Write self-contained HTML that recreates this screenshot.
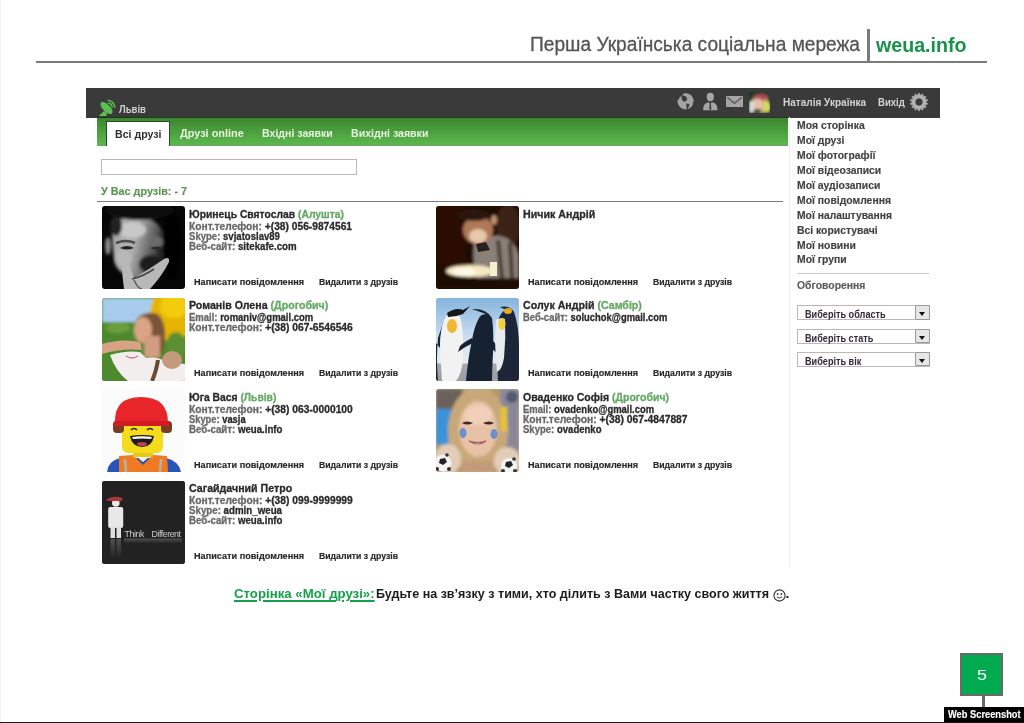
<!DOCTYPE html><html><head><meta charset="utf-8"><style>
html,body{margin:0;padding:0;background:#fff;width:1024px;height:723px;overflow:hidden;position:relative}
body{font-family:"Liberation Sans",sans-serif}
.t{position:absolute;white-space:nowrap;transform-origin:0 0;line-height:1}
.s{-webkit-text-stroke:0.3px currentColor}
.s2{-webkit-text-stroke:0.15px currentColor}
.b{position:absolute}
</style></head><body>

<div class="b" style="left:0;top:0;width:1px;height:723px;background:#f3f3f3"></div>
<div class="b" style="left:36px;top:60.5px;width:951px;height:2.7px;background:#7a7a7a"></div>
<div class="b" style="left:867px;top:29px;width:3px;height:33px;background:#7a7a7a"></div>
<div class="b" style="left:86px;top:88px;width:854px;height:29.5px;background:#3a3a3b"></div>
<div class="b" style="left:97px;top:117.5px;width:691px;height:28px;background:linear-gradient(#3c8630,#5ab64c 92%,#6aa862);box-sizing:border-box"></div>
<div class="b" style="left:97px;top:116.5px;width:691px;height:1.5px;background:#1d3a1a"></div>
<div class="b" style="left:105.5px;top:121px;width:64.5px;height:25px;background:#fff;border:1px solid #234a20;border-bottom:none;box-sizing:border-box"></div>
<div class="b" style="left:788.5px;top:117px;width:1px;height:450px;background:#f0f0f0"></div>
<div class="b" style="left:797px;top:272.5px;width:132px;height:1.5px;background:#c8c8c8"></div>
<div class="b" style="left:796.6px;top:305.3px;width:133px;height:14.6px;border:1px solid #b8b8b8;box-sizing:border-box;background:#fff"></div>
<div class="b" style="left:914.8px;top:305.4px;width:14.8px;height:14.4px;background:#e6e6e6;border:1.3px solid #9a9a9a;box-sizing:border-box;border-radius:1px"></div>
<div class="b" style="left:919px;top:311.9px;width:0;height:0;border-left:3.6px solid transparent;border-right:3.6px solid transparent;border-top:4.2px solid #111"></div>
<div class="b" style="left:796.6px;top:329.0px;width:133px;height:14.6px;border:1px solid #b8b8b8;box-sizing:border-box;background:#fff"></div>
<div class="b" style="left:914.8px;top:329.1px;width:14.8px;height:14.4px;background:#e6e6e6;border:1.3px solid #9a9a9a;box-sizing:border-box;border-radius:1px"></div>
<div class="b" style="left:919px;top:335.6px;width:0;height:0;border-left:3.6px solid transparent;border-right:3.6px solid transparent;border-top:4.2px solid #111"></div>
<div class="b" style="left:796.6px;top:352.0px;width:133px;height:14.6px;border:1px solid #b8b8b8;box-sizing:border-box;background:#fff"></div>
<div class="b" style="left:914.8px;top:352.1px;width:14.8px;height:14.4px;background:#e6e6e6;border:1.3px solid #9a9a9a;box-sizing:border-box;border-radius:1px"></div>
<div class="b" style="left:919px;top:358.6px;width:0;height:0;border-left:3.6px solid transparent;border-right:3.6px solid transparent;border-top:4.2px solid #111"></div>
<div class="b" style="left:101px;top:158.7px;width:256px;height:16.5px;border:1px solid #b8b8b8;box-sizing:border-box"></div>
<div class="b" style="left:97px;top:201px;width:686px;height:1.2px;background:#7a7a7a"></div>
<div class="b" style="left:960px;top:652.5px;width:43px;height:43px;background:#00aa4f;border:2.5px solid #6a6a6a;box-sizing:border-box"></div>
<div class="b" style="left:982px;top:695px;width:2.5px;height:12px;background:#6a6a6a"></div>
<div class="b" style="left:944px;top:706.5px;width:80px;height:17px;background:#000"></div>
<div class="b" style="left:0;top:721.5px;width:1024px;height:1.5px;background:#1a1a1a"></div>
<svg class="b" style="left:772.5px;top:588.5px" width="13" height="13" viewBox="0 0 13 13"><circle cx="6.5" cy="6.5" r="5.6" fill="none" stroke="#333" stroke-width="1.1"/><circle cx="4.6" cy="5" r="0.9" fill="#333"/><circle cx="8.4" cy="5" r="0.9" fill="#333"/><path d="M3.8 7.8 Q6.5 10.5 9.2 7.8" fill="none" stroke="#333" stroke-width="1"/></svg>
<svg class="b" style="left:102.0px;top:206.2px" width="83" height="83" viewBox="0 0 83 83">
<defs><clipPath id="ca"><rect width="83" height="83" rx="3"/></clipPath>
<filter id="fa" x="-30%" y="-30%" width="160%" height="160%"><feGaussianBlur stdDeviation="1.6"/></filter>
<filter id="ga" x="-30%" y="-30%" width="160%" height="160%"><feGaussianBlur stdDeviation="0.6"/></filter></defs>
<g clip-path="url(#ca)"><rect width="83" height="83" fill="#060606"/>
<defs><linearGradient id="fg1" x1="0" y1="0" x2="1" y2="0.3"><stop offset="0" stop-color="#a8a8a8"/><stop offset="0.5" stop-color="#b0b0b0"/><stop offset="0.85" stop-color="#5a5a5a"/><stop offset="1" stop-color="#202020"/></linearGradient></defs>
<g filter="url(#fa)">
<path d="M10 28 Q12 10 34 10 Q58 12 62 30 L62 56 Q58 72 40 74 Q16 70 12 55Z" fill="url(#fg1)"/>
<ellipse cx="30" cy="24" rx="14" ry="8" fill="#c8c8c8"/>
<ellipse cx="22" cy="52" rx="8" ry="8" fill="#b8b8b8"/>
<ellipse cx="48" cy="58" rx="11" ry="9" fill="#1e1e1e"/>
<ellipse cx="54" cy="36" rx="7" ry="6" fill="#6a6a6a"/>
<ellipse cx="70" cy="40" rx="9" ry="34" fill="#060606"/>
<ellipse cx="6" cy="40" rx="3" ry="9" fill="#8a8a8a"/>
<ellipse cx="38" cy="4" rx="34" ry="10" fill="#0a0a0a"/>
<ellipse cx="14" cy="20" rx="6" ry="10" fill="#202020"/>
</g>
<g filter="url(#ga)">
<path d="M18 42 Q25 38 32 42 Q25 45 18 42Z" fill="#222"/>
<path d="M48 42 Q55 39 61 42 Q55 45 48 42Z" fill="#2a2a2a"/>
<path d="M14 37 Q24 33 33 37" stroke="#333" stroke-width="2.6" fill="none" opacity="0.8"/>
<path d="M20 57 Q24 53 27 58 L32 72 Q46 64 62 53 Q68 50 67 56 Q60 70 48 83 L22 83 Q20 70 20 57Z" fill="#b8b8b8"/>
<path d="M30 73 Q42 70 52 63" stroke="#4a4a4a" stroke-width="1.8" fill="none"/>
<path d="M32 74 Q36 83 40 83" stroke="#555" stroke-width="1.4" fill="none"/>
</g></g></svg>
<svg class="b" style="left:102.0px;top:297.7px" width="83" height="83" viewBox="0 0 83 83">
<defs><clipPath id="cb"><rect width="83" height="83" rx="3"/></clipPath>
<filter id="fb" x="-30%" y="-30%" width="160%" height="160%"><feGaussianBlur stdDeviation="1.6"/></filter>
<filter id="gb" x="-30%" y="-30%" width="160%" height="160%"><feGaussianBlur stdDeviation="0.6"/></filter></defs>
<g clip-path="url(#cb)"><rect width="83" height="83" fill="#4f8a2c"/>
<g filter="url(#fb)">
<rect x="0" y="0" width="56" height="30" fill="#a8cdec"/>
<ellipse cx="70" cy="16" rx="22" ry="28" fill="#e6b400"/>
<ellipse cx="72" cy="8" rx="14" ry="12" fill="#f2cc10"/>
<rect x="0" y="24" width="40" height="59" fill="#4e8a2e"/>
<ellipse cx="16" cy="30" rx="12" ry="5" fill="#6e9e3a"/>
<ellipse cx="74" cy="48" rx="10" ry="14" fill="#5a9030"/>
<path d="M34 22 Q42 12 56 16 Q66 26 62 50 L56 62 L44 52Z" fill="#7a5436"/>
<ellipse cx="41" cy="32" rx="9" ry="13" fill="#dba486"/>
<rect x="42" y="38" width="16" height="22" fill="#d49c80"/>
</g>
<g filter="url(#gb)">
<path d="M0 46 Q20 40 38 44 L40 52 Q20 50 0 56 Z" fill="#d8a286"/>
<path d="M8 57 Q24 52 38 54 L44 60 Q56 58 64 64 L83 66 L83 83 L26 83 Q14 74 8 57Z" fill="#f2eeee"/>
<ellipse cx="70" cy="62" rx="10" ry="9" fill="#c4987c"/>
<path d="M24 58 Q30 62 36 58" stroke="#d07080" stroke-width="1.5" fill="none"/>
<path d="M56 62 Q54 74 50 83" stroke="#6a4a30" stroke-width="4" fill="none"/>
<rect x="0" y="56" width="8" height="27" fill="#4e8a2e"/>
</g></g></svg>
<svg class="b" style="left:102.0px;top:389.2px" width="83" height="83" viewBox="0 0 83 83">
<defs><clipPath id="cc"><rect width="83" height="83" rx="0"/></clipPath>
<filter id="fc" x="-30%" y="-30%" width="160%" height="160%"><feGaussianBlur stdDeviation="1.6"/></filter>
<filter id="gc" x="-30%" y="-30%" width="160%" height="160%"><feGaussianBlur stdDeviation="0.6"/></filter></defs>
<g clip-path="url(#cc)"><rect width="83" height="83" fill="#fbfbfb"/>
<g filter="url(#gc)">
<path d="M5 83 Q6 72 18 69 L64 69 Q77 72 79 83 Z" fill="#2a55b8"/>
<path d="M17 67 L31 66 L41 76 L51 66 L65 67 L66 83 L17 83 Z" fill="#f07a22"/>
<path d="M23 70 L24 83 M59 70 L58 83" stroke="#b8b0a0" stroke-width="2.6"/>
<path d="M33 66 L41 73 L49 66 Z" fill="#f4f4f4"/>
<rect x="31" y="62" width="20" height="6" fill="#e8c818"/>
<rect x="20" y="32" width="41" height="32" rx="6" fill="#f4dc1a"/>
<rect x="11" y="32" width="11" height="12" rx="4" fill="#7a3a20"/>
<rect x="59" y="32" width="11" height="12" rx="4" fill="#7a3a20"/>
<path d="M13 34 Q12 8 39 8 Q66 8 66 34 L67 37 L12 37 Z" fill="#e8262a"/>
<rect x="11.5" y="32" width="56" height="5" rx="2" fill="#d01e22"/>
<path d="M29 41 Q32 38 35 41 M45 41 Q48 38 51 41" stroke="#222" stroke-width="1.6" fill="none"/>
<path d="M28 47 Q40 45 52 47 Q50 58 40 58 Q30 58 28 47Z" fill="#1a1a1a"/>
<path d="M30 48 Q40 46.5 50 48 L49 50 Q40 49 31 50Z" fill="#fff"/>
<ellipse cx="40" cy="55" rx="5" ry="2" fill="#c04050"/>
</g></g></svg>
<svg class="b" style="left:102.0px;top:480.7px" width="83" height="83" viewBox="0 0 83 83">
<defs><clipPath id="cd"><rect width="83" height="83" rx="3"/></clipPath>
<filter id="fd" x="-30%" y="-30%" width="160%" height="160%"><feGaussianBlur stdDeviation="1.6"/></filter>
<filter id="gd" x="-30%" y="-30%" width="160%" height="160%"><feGaussianBlur stdDeviation="0.6"/></filter></defs>
<g clip-path="url(#cd)"><rect width="83" height="83" fill="#222"/>
<rect width="83" height="83" fill="#222"/>
<g filter="url(#gd)">
<rect x="6.2" y="26" width="15" height="21" rx="2" fill="#e8e8e8"/>
<rect x="8.5" y="45" width="4.5" height="12" fill="#e0e0e0"/>
<rect x="14.5" y="45" width="4.5" height="12" fill="#e0e0e0"/>
<circle cx="13.8" cy="22" r="3.8" fill="#e8e8e8"/>
<path d="M4 18.5 Q12 14 20.5 17 L20 20 L6 20Z" fill="#a83838"/>
<defs><linearGradient id="rf4" x1="0" y1="0" x2="0" y2="1"><stop offset="0" stop-color="#888" stop-opacity="0.45"/><stop offset="1" stop-color="#888" stop-opacity="0"/></linearGradient></defs><rect x="8.5" y="58" width="4.5" height="20" fill="url(#rf4)"/><rect x="14.5" y="58" width="4.5" height="20" fill="url(#rf4)"/>
<text x="22.5" y="56" font-family="Liberation Sans" font-size="8.8" fill="#cfcfcf" letter-spacing="-0.4">Think</text>
<text x="49.5" y="56" font-family="Liberation Sans" font-size="8.8" fill="#cfcfcf" letter-spacing="-0.45">Different</text>
<rect x="22" y="57.5" width="58" height="5" fill="url(#rf4)"/>
</g></g></svg>
<svg class="b" style="left:436.0px;top:206.2px" width="83" height="83" viewBox="0 0 83 83">
<defs><clipPath id="ce"><rect width="83" height="83" rx="3"/></clipPath>
<filter id="fe" x="-30%" y="-30%" width="160%" height="160%"><feGaussianBlur stdDeviation="1.6"/></filter>
<filter id="ge" x="-30%" y="-30%" width="160%" height="160%"><feGaussianBlur stdDeviation="0.6"/></filter></defs>
<g clip-path="url(#ce)"><rect width="83" height="83" fill="#1c0804"/>
<g filter="url(#fe)">
<rect x="0" y="0" width="83" height="83" fill="#1c0804"/>
<rect x="0" y="0" width="30" height="60" fill="#2a0e06"/>
<ellipse cx="72" cy="20" rx="12" ry="22" fill="#3a2018"/>
<path d="M38 38 Q50 28 64 30 Q80 34 83 50 L83 72 L40 72 Q36 55 38 38Z" fill="#8a8078"/>
<path d="M62 34 L66 72 M74 36 L76 72" stroke="#4a3a30" stroke-width="4"/>
<ellipse cx="42" cy="24" rx="15" ry="14" fill="#b07858"/>
<ellipse cx="42" cy="30" rx="9" ry="7" fill="#e8c8a8"/>
<ellipse cx="38" cy="9" rx="16" ry="6" fill="#2a140c"/>
<ellipse cx="58" cy="14" rx="3" ry="5" fill="#c09070"/>
<ellipse cx="34" cy="65" rx="24" ry="6" fill="#f6e8c0"/>
<ellipse cx="28" cy="66" rx="12" ry="4" fill="#fffae8"/>
<rect x="0" y="74" width="83" height="9" fill="#1a0c06"/>
</g>
<g filter="url(#ge)">
<path d="M40 38 L50 36 L54 44 L42 46Z" fill="#2a2020"/>
<rect x="54" y="56" width="7" height="14" fill="#f4f0d0"/>
</g></g></svg>
<svg class="b" style="left:436.0px;top:297.7px" width="83" height="83" viewBox="0 0 83 83">
<defs><clipPath id="cf"><rect width="83" height="83" rx="3"/></clipPath>
<filter id="ff" x="-30%" y="-30%" width="160%" height="160%"><feGaussianBlur stdDeviation="1.6"/></filter>
<filter id="gf" x="-30%" y="-30%" width="160%" height="160%"><feGaussianBlur stdDeviation="0.6"/></filter></defs>
<g clip-path="url(#cf)"><rect width="83" height="83" fill="#a8c8e4"/>
<defs><linearGradient id="sky6" x1="0" y1="0" x2="0" y2="1"><stop offset="0" stop-color="#86b4de"/><stop offset="0.5" stop-color="#cfe0f0"/><stop offset="0.78" stop-color="#e6ecf2"/><stop offset="0.8" stop-color="#a8a8ac"/><stop offset="1" stop-color="#9a9ca2"/></linearGradient></defs>
<rect width="83" height="83" fill="url(#sky6)"/>
<g filter="url(#gf)">
<path d="M4 50 Q4 35 8 22 L2 40 Q0 60 2 83 L0 83 L0 45Z" fill="#1e2834"/>
<path d="M6 83 L4 52 Q4 24 12 16 Q22 12 25 22 Q28 40 27 60 Q26 76 20 83Z" fill="#f2f2f2"/>
<path d="M11 15 Q20 9 27 12 L34 8 L27 16 Q20 19 12 19Z" fill="#161616"/>
<ellipse cx="16" cy="28" rx="5" ry="7" fill="#f0b830"/>
<path d="M24 48 Q28 44 36 40 L37 45 Q30 48 22 54Z" fill="#162230"/>
<path d="M30 83 Q32 60 36 42 Q38 30 42 22 Q44 16 50 16 L36 11 Q50 10 56 20 Q58 35 57 55 Q56 75 56 83Z" fill="#162230"/>
<path d="M56 42 Q64 50 72 62 L70 64 Q62 56 55 50Z" fill="#162230"/>
<path d="M62 83 Q60 55 62 24 Q64 14 70 12 L64 9 Q74 7 78 14 Q84 30 83 60 L83 83Z" fill="#1a2838"/>
<path d="M60 22 Q65 19 69 21 Q70 40 68 60 Q66 72 61 74 Q58 48 60 22Z" fill="#e8ecee"/>
<ellipse cx="72" cy="13" rx="4" ry="3" fill="#e8a820"/>
<ellipse cx="66" cy="26" rx="3.5" ry="6" fill="#f4d040"/>
</g></g></svg>
<svg class="b" style="left:436.0px;top:389.2px" width="83" height="83" viewBox="0 0 83 83">
<defs><clipPath id="cg"><rect width="83" height="83" rx="3"/></clipPath>
<filter id="fg" x="-30%" y="-30%" width="160%" height="160%"><feGaussianBlur stdDeviation="1.6"/></filter>
<filter id="gg" x="-30%" y="-30%" width="160%" height="160%"><feGaussianBlur stdDeviation="0.6"/></filter></defs>
<g clip-path="url(#cg)"><rect width="83" height="83" fill="#c8b090"/>
<g filter="url(#fg)">
<rect width="83" height="83" fill="#b89868"/>
<rect x="0" y="0" width="26" height="24" fill="#6a625a"/>
<rect x="0" y="20" width="15" height="36" fill="#3a92d6"/>
<rect x="64" y="0" width="19" height="62" fill="#8a8898"/>
<ellipse cx="76" cy="8" rx="6" ry="6" fill="#505a70"/>
<ellipse cx="42" cy="42" rx="30" ry="44" fill="#c8a878"/>
<ellipse cx="42" cy="40" rx="19" ry="28" fill="#e8c2a6"/>
<ellipse cx="42" cy="26" rx="14" ry="10" fill="#f0d0b8"/>
<rect x="65" y="18" width="6" height="24" fill="#e8c420"/>
<ellipse cx="12" cy="70" rx="13" ry="15" fill="#e4cdb8"/>
<ellipse cx="71" cy="72" rx="13" ry="14" fill="#e4cdb8"/>
<rect x="26" y="72" width="30" height="11" fill="#c49a78"/>
</g>
<g filter="url(#gg)">
<path d="M26 34 Q31 31 37 34 Q31 37 26 34Z M47 34 Q53 31 58 34 Q53 37 47 34Z" fill="#3a2a28"/>
<ellipse cx="27" cy="44" rx="3.5" ry="5" fill="#6a90d0"/>
<ellipse cx="58" cy="45" rx="3.5" ry="5" fill="#6a90d0"/>
<path d="M33 52 Q42 58 50 52 Q42 55 33 52Z" fill="#f4f0ee" stroke="#a86060" stroke-width="1.2"/>
<circle cx="7" cy="74" r="8.5" fill="#f2f2f2"/>
<path d="M4 70 L9 69 L11 73 L7 76 L3 74Z" fill="#222"/><circle cx="1" cy="80" r="2" fill="#333"/><circle cx="13" cy="80" r="2" fill="#333"/><circle cx="11" cy="66" r="1.8" fill="#333"/>
<circle cx="73" cy="77" r="8" fill="#f2f2f2"/>
<path d="M70 73 L75 72 L77 76 L73 79 L69 77Z" fill="#222"/><circle cx="67" cy="82" r="2" fill="#333"/><circle cx="79" cy="82" r="2" fill="#333"/><circle cx="78" cy="70" r="1.8" fill="#333"/>
</g></g></svg>
<svg class="b" style="left:95px;top:96px" width="30" height="24" viewBox="0 0 30 24">
<g fill="#5cbf52">
<ellipse cx="11.5" cy="12" rx="7.8" ry="3.6" transform="rotate(45 11.5 12)"/>
<path d="M9 15 L12 17 L11.5 20 L3.8 20 Z"/>
</g>

<g fill="none" stroke="#5cbf52" stroke-width="1.5" stroke-linecap="round">
<path d="M13.3 4.6 A6.8 6.8 0 0 1 19.8 11.2"/>
<path d="M13.3 7.3 A4 4 0 0 1 17.1 11.3"/>
</g>
</svg>
<svg class="b" style="left:674px;top:89px" width="26" height="24" viewBox="0 0 26 24">
<defs><filter id="gb"><feGaussianBlur stdDeviation="0.35"/></filter></defs>
<g filter="url(#gb)">
<circle cx="11.6" cy="12.3" r="8.1" fill="#a4a4a4"/>
<path d="M7.6 6.8 Q10 5.8 12 7.6 Q13.6 9.6 12.6 11.6 Q11 13 9.4 12.6 Q7.8 11.4 7.5 9 Z" fill="#3a3a3a"/>
<path d="M2.8 10 Q4.2 5.5 8.8 3.6 L9 5.9 Q7 6.6 5.4 8.8 L4.6 11 Z" fill="#3a3a3a"/>
<path d="M12 14.6 Q14 14.4 15.6 15.6 Q15 17.6 13.4 20.5 L12.6 20.5 Q12.8 17.5 12 14.6 Z" fill="#3a3a3a"/>
<path d="M19.8 12.5 L18.2 13.8 L19.6 15 Z" fill="#3a3a3a"/>
</g>
</svg>
<svg class="b" style="left:702px;top:92px" width="17" height="19" viewBox="0 0 17 19">
<ellipse cx="8.3" cy="5" rx="3.6" ry="4.2" fill="#a6a6a6"/>
<path d="M1.2 18.2 C1 14.5 2 11.7 5 10.7 L6.8 10.3 L8.3 12 L9.8 10.3 L11.6 10.7 C14.6 11.7 15.6 14.5 15.4 18.2 Z" fill="#a6a6a6"/>
<path d="M7.7 11.3 L8.9 11.3 L9.3 17 L8.3 18 L7.3 17 Z" fill="#3b3b3b"/>
</svg>
<svg class="b" style="left:725px;top:95px" width="19" height="13" viewBox="0 0 19 13">
<rect x="1" y="1" width="17" height="11" fill="#a6a6a6"/>
<path d="M2.2 2.2 L9.5 8.3 L16.8 2.2" fill="none" stroke="#5a5a5a" stroke-width="1.4"/>
<path d="M2 11 L6.5 7 M17 11 L12.5 7" fill="none" stroke="#8a8a8a" stroke-width="0.8"/>
</svg>
<svg class="b" style="left:749px;top:92px" width="21" height="21" viewBox="0 0 21 21">
<defs><filter id="fa" x="-20%" y="-20%" width="140%" height="140%"><feGaussianBlur stdDeviation="0.7"/></filter><clipPath id="ca"><rect width="21" height="21"/></clipPath></defs>
<g clip-path="url(#ca)">
<rect width="21" height="21" fill="#1e3a22"/>
<g filter="url(#fa)">
<ellipse cx="11" cy="12" rx="9" ry="10" fill="#cdb878"/>
<ellipse cx="12" cy="5" rx="8" ry="3.5" fill="#b04858"/>
<ellipse cx="9" cy="12.5" rx="5" ry="6" fill="#e6c0a8"/>
<rect x="0" y="9" width="4.5" height="12" fill="#dfe4ea"/>
<ellipse cx="18" cy="15" rx="4" ry="6" fill="#d4d860"/>
<rect x="5" y="17" width="7" height="4" fill="#3a3a3a"/>
</g></g></svg>
<svg class="b" style="left:909.4px;top:92.3px" width="20" height="20" viewBox="0 0 20 20">
<path d="M9.05,2.96 L9.34,1.33 L10.66,1.33 L10.95,2.96 L12.19,3.25 L13.17,1.90 L14.36,2.47 L13.91,4.07 L14.91,4.87 L16.37,4.07 L17.20,5.11 L16.09,6.36 L16.65,7.51 L18.31,7.42 L18.60,8.72 L17.07,9.36 L17.07,10.64 L18.60,11.28 L18.31,12.58 L16.65,12.49 L16.09,13.64 L17.20,14.89 L16.37,15.93 L14.91,15.13 L13.91,15.93 L14.36,17.53 L13.17,18.10 L12.19,16.75 L10.95,17.04 L10.66,18.67 L9.34,18.67 L9.05,17.04 L7.81,16.75 L6.83,18.10 L5.64,17.53 L6.09,15.93 L5.09,15.13 L3.63,15.93 L2.80,14.89 L3.91,13.64 L3.35,12.49 L1.69,12.58 L1.40,11.28 L2.93,10.64 L2.93,9.36 L1.40,8.72 L1.69,7.42 L3.35,7.51 L3.91,6.36 L2.80,5.11 L3.63,4.07 L5.09,4.87 L6.09,4.07 L5.64,2.47 L6.83,1.90 L7.81,3.25 Z M10.00 6.10 a3.9 3.9 0 1 0 0.01 0 Z" fill="#b2b2b2" fill-rule="evenodd" stroke="#b2b2b2" stroke-width="0.5" stroke-linejoin="round"/>
</svg>
<div class="t s" id="t0" style="left:530.00px;top:34.27px;font-size:20.00px;color:#555555;font-weight:normal;transform:scaleX(0.9576);">Перша Українська соціальна мережа</div>
<div class="t " id="t1" style="left:875.50px;top:35.79px;font-size:19.50px;color:#17924a;font-weight:bold;transform:scaleX(1.0064);">weua.info</div>
<div class="t " id="t2" style="left:119.00px;top:103.61px;font-size:10.50px;color:#d0d0d0;font-weight:bold;transform:scaleX(0.9104);">Львів</div>
<div class="t " id="t3" style="left:782.70px;top:96.83px;font-size:10.60px;color:#d4d4d4;font-weight:bold;transform:scaleX(0.9460);">Наталія Українка</div>
<div class="t " id="t4" style="left:877.60px;top:96.83px;font-size:10.60px;color:#d4d4d4;font-weight:bold;transform:scaleX(0.9013);">Вихід</div>
<div class="t " id="t5" style="left:114.60px;top:128.67px;font-size:11.50px;color:#2e2e2e;font-weight:bold;transform:scaleX(0.9202);">Всі друзі</div>
<div class="t " id="t6" style="left:179.70px;top:127.76px;font-size:10.80px;color:#e8f4e0;font-weight:bold;transform:scaleX(1.0084);">Друзі online</div>
<div class="t " id="t7" style="left:262.00px;top:127.76px;font-size:10.80px;color:#e8f4e0;font-weight:bold;transform:scaleX(0.9799);">Вхідні заявки</div>
<div class="t " id="t8" style="left:350.60px;top:127.76px;font-size:10.80px;color:#e8f4e0;font-weight:bold;transform:scaleX(0.9794);">Вихідні заявки</div>
<div class="t s2" id="t9" style="left:797.30px;top:120.33px;font-size:10.60px;color:#424242;font-weight:bold;transform:scaleX(0.9854);">Моя сторінка</div>
<div class="t s2" id="t10" style="left:797.30px;top:135.23px;font-size:10.60px;color:#424242;font-weight:bold;transform:scaleX(0.9800);">Мої друзі</div>
<div class="t s2" id="t11" style="left:797.30px;top:150.13px;font-size:10.60px;color:#424242;font-weight:bold;transform:scaleX(0.9800);">Мої фотографії</div>
<div class="t s2" id="t12" style="left:797.30px;top:165.03px;font-size:10.60px;color:#424242;font-weight:bold;transform:scaleX(0.9800);">Мої відеозаписи</div>
<div class="t s2" id="t13" style="left:797.30px;top:179.93px;font-size:10.60px;color:#424242;font-weight:bold;transform:scaleX(0.9800);">Мої аудіозаписи</div>
<div class="t s2" id="t14" style="left:797.30px;top:194.83px;font-size:10.60px;color:#424242;font-weight:bold;transform:scaleX(0.9800);">Мої повідомлення</div>
<div class="t s2" id="t15" style="left:797.30px;top:209.73px;font-size:10.60px;color:#424242;font-weight:bold;transform:scaleX(0.9748);">Мої налаштування</div>
<div class="t s2" id="t16" style="left:797.30px;top:224.63px;font-size:10.60px;color:#424242;font-weight:bold;transform:scaleX(0.9800);">Всі користувачі</div>
<div class="t s2" id="t17" style="left:797.30px;top:239.53px;font-size:10.60px;color:#424242;font-weight:bold;transform:scaleX(0.9800);">Мої новини</div>
<div class="t s2" id="t18" style="left:797.30px;top:254.43px;font-size:10.60px;color:#424242;font-weight:bold;transform:scaleX(0.9800);">Мої групи</div>
<div class="t s2" id="t19" style="left:797.00px;top:280.43px;font-size:10.60px;color:#5a5a5a;font-weight:bold;transform:scaleX(0.9811);">Обговорення</div>
<div class="t " id="t20" style="left:805.40px;top:309.88px;font-size:10.30px;color:#302838;font-weight:bold;transform:scaleX(0.8857);">Виберіть область</div>
<div class="t " id="t21" style="left:805.40px;top:333.58px;font-size:10.30px;color:#302838;font-weight:bold;transform:scaleX(0.8860);">Виберіть стать</div>
<div class="t " id="t22" style="left:805.40px;top:356.58px;font-size:10.30px;color:#302838;font-weight:bold;transform:scaleX(0.8860);">Виберіть вік</div>
<div class="t s2" id="t23" style="left:101.00px;top:185.69px;font-size:11.00px;color:#5a9450;font-weight:bold;transform:scaleX(0.9827);">У Вас друзів: - 7</div>
<div class="t s" id="t24" style="left:189.00px;top:208.99px;font-size:11.00px;color:#2a2a2a;font-weight:bold;transform:scaleX(0.9398);"><span style="color:#2a2a2a">Юринець Святослав</span> <span style="color:#64a864">(Алушта)</span></div>
<div class="t s" id="t25" style="left:189.00px;top:220.53px;font-size:10.60px;color:#2a2a2a;font-weight:bold;transform:scaleX(0.9645);"><span style="color:#686868">Конт.телефон:</span> <span style="color:#2a2a2a">+(38) 056-9874561</span></div>
<div class="t s" id="t26" style="left:189.00px;top:230.63px;font-size:10.60px;color:#2a2a2a;font-weight:bold;transform:scaleX(0.9024);"><span style="color:#686868">Skype:</span> <span style="color:#2a2a2a">svjatoslav89</span></div>
<div class="t s" id="t27" style="left:189.00px;top:240.73px;font-size:10.60px;color:#2a2a2a;font-weight:bold;transform:scaleX(0.9137);"><span style="color:#686868">Веб-сайт:</span> <span style="color:#2a2a2a">sitekafe.com</span></div>
<div class="t s2" id="t28" style="left:194.00px;top:277.98px;font-size:9.00px;color:#262626;font-weight:bold;transform:scaleX(1.0140);">Написати повідомлення</div>
<div class="t s2" id="t29" style="left:319.00px;top:277.98px;font-size:9.00px;color:#262626;font-weight:bold;transform:scaleX(0.9645);">Видалити з друзів</div>
<div class="t s" id="t30" style="left:189.00px;top:300.49px;font-size:11.00px;color:#2a2a2a;font-weight:bold;transform:scaleX(0.9655);"><span style="color:#2a2a2a">Романів Олена</span> <span style="color:#64a864">(Дрогобич)</span></div>
<div class="t s" id="t31" style="left:189.00px;top:312.03px;font-size:10.60px;color:#2a2a2a;font-weight:bold;transform:scaleX(0.8963);"><span style="color:#686868">Email:</span> <span style="color:#2a2a2a">romaniv@gmail.com</span></div>
<div class="t s" id="t32" style="left:189.00px;top:322.13px;font-size:10.60px;color:#2a2a2a;font-weight:bold;transform:scaleX(0.9692);"><span style="color:#686868">Конт.телефон:</span> <span style="color:#2a2a2a">+(38) 067-6546546</span></div>
<div class="t s2" id="t33" style="left:194.00px;top:369.48px;font-size:9.00px;color:#262626;font-weight:bold;transform:scaleX(1.0140);">Написати повідомлення</div>
<div class="t s2" id="t34" style="left:319.00px;top:369.48px;font-size:9.00px;color:#262626;font-weight:bold;transform:scaleX(0.9645);">Видалити з друзів</div>
<div class="t s" id="t35" style="left:189.00px;top:391.99px;font-size:11.00px;color:#2a2a2a;font-weight:bold;transform:scaleX(0.9382);"><span style="color:#2a2a2a">Юга Вася</span> <span style="color:#64a864">(Львів)</span></div>
<div class="t s" id="t36" style="left:189.00px;top:403.53px;font-size:10.60px;color:#2a2a2a;font-weight:bold;transform:scaleX(0.9692);"><span style="color:#686868">Конт.телефон:</span> <span style="color:#2a2a2a">+(38) 063-0000100</span></div>
<div class="t s" id="t37" style="left:189.00px;top:413.63px;font-size:10.60px;color:#2a2a2a;font-weight:bold;transform:scaleX(0.8814);"><span style="color:#686868">Skype:</span> <span style="color:#2a2a2a">vasja</span></div>
<div class="t s" id="t38" style="left:189.00px;top:423.73px;font-size:10.60px;color:#2a2a2a;font-weight:bold;transform:scaleX(0.9128);"><span style="color:#686868">Веб-сайт:</span> <span style="color:#2a2a2a">weua.info</span></div>
<div class="t s2" id="t39" style="left:194.00px;top:460.98px;font-size:9.00px;color:#262626;font-weight:bold;transform:scaleX(1.0140);">Написати повідомлення</div>
<div class="t s2" id="t40" style="left:319.00px;top:460.98px;font-size:9.00px;color:#262626;font-weight:bold;transform:scaleX(0.9645);">Видалити з друзів</div>
<div class="t s" id="t41" style="left:189.00px;top:483.49px;font-size:11.00px;color:#2a2a2a;font-weight:bold;transform:scaleX(0.9662);"><span style="color:#2a2a2a">Сагайдачний Петро</span></div>
<div class="t s" id="t42" style="left:189.00px;top:495.03px;font-size:10.60px;color:#2a2a2a;font-weight:bold;transform:scaleX(0.9692);"><span style="color:#686868">Конт.телефон:</span> <span style="color:#2a2a2a">+(38) 099-9999999</span></div>
<div class="t s" id="t43" style="left:189.00px;top:505.13px;font-size:10.60px;color:#2a2a2a;font-weight:bold;transform:scaleX(0.9181);"><span style="color:#686868">Skype:</span> <span style="color:#2a2a2a">admin_weua</span></div>
<div class="t s" id="t44" style="left:189.00px;top:515.23px;font-size:10.60px;color:#2a2a2a;font-weight:bold;transform:scaleX(0.9128);"><span style="color:#686868">Веб-сайт:</span> <span style="color:#2a2a2a">weua.info</span></div>
<div class="t s2" id="t45" style="left:194.00px;top:552.48px;font-size:9.00px;color:#262626;font-weight:bold;transform:scaleX(1.0140);">Написати повідомлення</div>
<div class="t s2" id="t46" style="left:319.00px;top:552.48px;font-size:9.00px;color:#262626;font-weight:bold;transform:scaleX(0.9645);">Видалити з друзів</div>
<div class="t s" id="t47" style="left:523.00px;top:208.99px;font-size:11.00px;color:#2a2a2a;font-weight:bold;transform:scaleX(0.9701);"><span style="color:#2a2a2a">Ничик Андрій</span></div>
<div class="t s2" id="t48" style="left:528.00px;top:277.98px;font-size:9.00px;color:#262626;font-weight:bold;transform:scaleX(1.0140);">Написати повідомлення</div>
<div class="t s2" id="t49" style="left:653.00px;top:277.98px;font-size:9.00px;color:#262626;font-weight:bold;transform:scaleX(0.9645);">Видалити з друзів</div>
<div class="t s" id="t50" style="left:523.00px;top:300.49px;font-size:11.00px;color:#2a2a2a;font-weight:bold;transform:scaleX(0.9652);"><span style="color:#2a2a2a">Солук Андрій</span> <span style="color:#64a864">(Самбір)</span></div>
<div class="t s" id="t51" style="left:523.00px;top:312.03px;font-size:10.60px;color:#2a2a2a;font-weight:bold;transform:scaleX(0.8869);"><span style="color:#686868">Веб-сайт:</span> <span style="color:#2a2a2a">soluchok@gmail.com</span></div>
<div class="t s2" id="t52" style="left:528.00px;top:369.48px;font-size:9.00px;color:#262626;font-weight:bold;transform:scaleX(1.0140);">Написати повідомлення</div>
<div class="t s2" id="t53" style="left:653.00px;top:369.48px;font-size:9.00px;color:#262626;font-weight:bold;transform:scaleX(0.9645);">Видалити з друзів</div>
<div class="t s" id="t54" style="left:523.00px;top:391.99px;font-size:11.00px;color:#2a2a2a;font-weight:bold;transform:scaleX(0.9568);"><span style="color:#2a2a2a">Оваденко Софія</span> <span style="color:#64a864">(Дрогобич)</span></div>
<div class="t s" id="t55" style="left:523.00px;top:403.53px;font-size:10.60px;color:#2a2a2a;font-weight:bold;transform:scaleX(0.8929);"><span style="color:#686868">Email:</span> <span style="color:#2a2a2a">ovadenko@gmail.com</span></div>
<div class="t s" id="t56" style="left:523.00px;top:413.63px;font-size:10.60px;color:#2a2a2a;font-weight:bold;transform:scaleX(0.9740);"><span style="color:#686868">Конт.телефон:</span> <span style="color:#2a2a2a">+(38) 067-4847887</span></div>
<div class="t s" id="t57" style="left:523.00px;top:423.73px;font-size:10.60px;color:#2a2a2a;font-weight:bold;transform:scaleX(0.9007);"><span style="color:#686868">Skype:</span> <span style="color:#2a2a2a">ovadenko</span></div>
<div class="t s2" id="t58" style="left:528.00px;top:460.98px;font-size:9.00px;color:#262626;font-weight:bold;transform:scaleX(1.0140);">Написати повідомлення</div>
<div class="t s2" id="t59" style="left:653.00px;top:460.98px;font-size:9.00px;color:#262626;font-weight:bold;transform:scaleX(0.9645);">Видалити з друзів</div>
<div class="t " id="t60" style="left:233.80px;top:587.29px;font-size:13.60px;color:#17a04c;font-weight:bold;transform:scaleX(0.9725);"><span style="text-decoration:underline;text-decoration-thickness:1.5px;text-underline-offset:1.5px">Сторінка «Мої друзі»:</span></div>
<div class="t " id="t61" style="left:375.50px;top:587.29px;font-size:13.60px;color:#1c1c1c;font-weight:bold;transform:scaleX(0.9216);">Будьте на зв’язку з тими, хто ділить з Вами частку свого життя</div>
<div class="t " id="t62" style="left:785.50px;top:587.29px;font-size:13.60px;color:#1c1c1c;font-weight:bold;">.</div>
<div class="t " id="t63" style="left:976.50px;top:667.48px;font-size:15.50px;color:#ffffff;font-weight:normal;transform:scaleX(1.1594);">5</div>
<div class="t s2" id="t64" style="left:948.00px;top:708.63px;font-size:10.60px;color:#ffffff;font-weight:bold;transform:scaleX(0.8767);">Web Screenshot</div>
</body></html>
